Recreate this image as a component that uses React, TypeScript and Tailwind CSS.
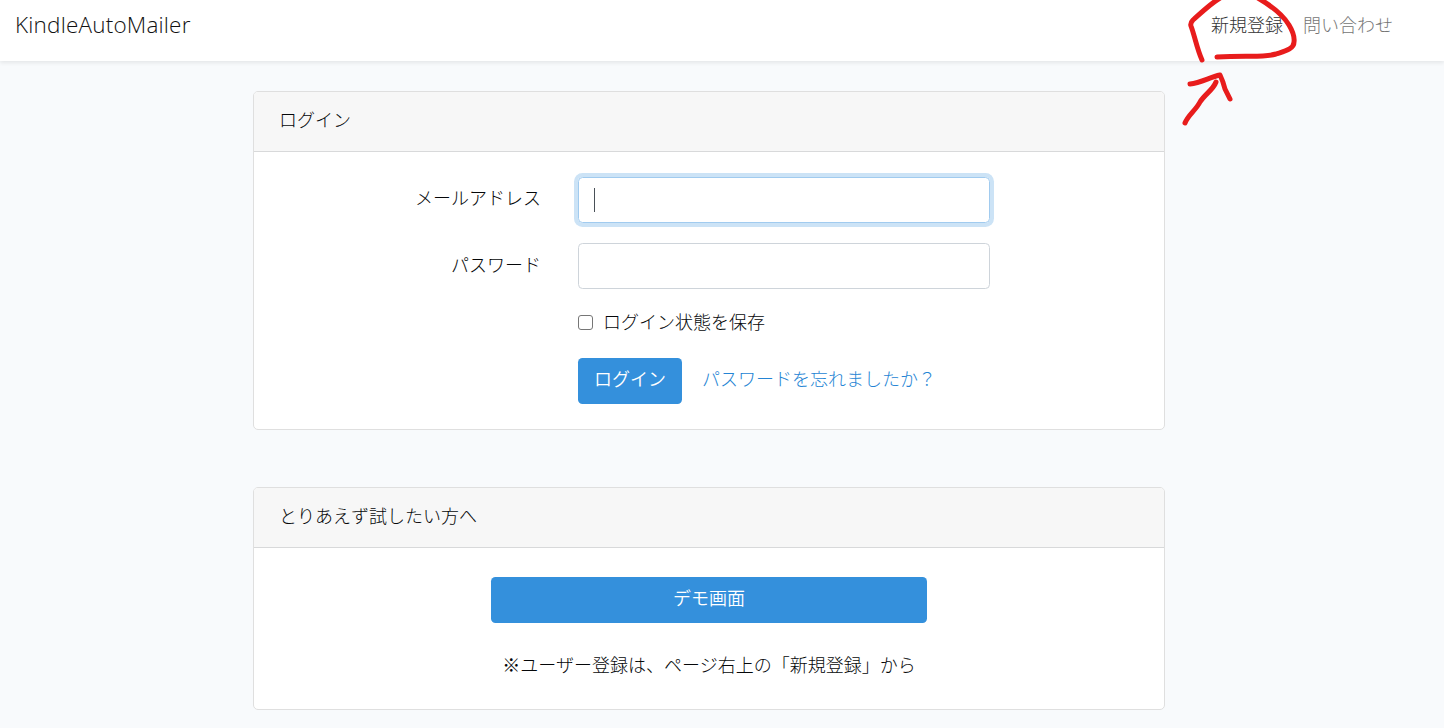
import React from "react";

function Card({ title, className, children }: { title: string; className: string; children: React.ReactNode }) {
  return (
    <section className={`flex w-[912px] flex-col overflow-hidden rounded-[5px] border border-[#dfdfdf] bg-white ${className}`}>
      <header className="h-[60px] shrink-0 border-b border-[#d8d9da] bg-[#f7f7f7] px-[25px] pt-[13px]">{title}</header>
      {children}
    </section>
  );
}

function Annotation() {
  return (
    <svg className="pointer-events-none absolute top-0 right-0" width="280" height="140" viewBox="0 0 280 140" fill="none" stroke="#e81c1c" strokeWidth="5" strokeLinecap="round" strokeLinejoin="round">
      <path d="M38 60C33 49 31 37 27 26Q26 23 29 20C38 12 46 4 56 -2M94 -2C106 5 119 15 125 25Q131 35 130 42C130 49 121 51 112 54C99 58 85 55 53 57" />
      <path d="M21 123C24 115 32 110 36 102C41 94 49 90 52 82M26 84C37 83 46 77 56 75Q59 81 61 89L66 99" />
    </svg>
  );
}

export default function App() {
  return (
    <div className="relative flex h-[728px] w-[1444px] flex-col overflow-hidden bg-[#f8fafc] font-['Noto_Sans_CJK_JP',sans-serif] text-[18px] leading-[28.8px] font-light text-[#050709]">
      <nav className="flex h-[61px] shrink-0 justify-between bg-white pr-[51px] pl-[15px] shadow-[0_2px_4px_rgba(0,0,0,0.08)]">
        <a className="pt-[7px] font-['Open_Sans',sans-serif] text-[22.5px] leading-[36px] tracking-[0.2px] text-[#111111]">KindleAutoMailer</a>
        <div className="flex gap-[20px] pt-[10px]">
          <a className="text-[#333333]">新規登録</a>
          <a className="text-[#757575]">問い合わせ</a>
        </div>
      </nav>
      <main className="flex flex-col pt-[30px] pl-[253px]">
        <Card title="ログイン" className="h-[339px]">
          <form className="flex flex-col pt-[25px] pl-[324px]">
            <div className="-ml-[200px] flex">
              <label className="w-[163px] pt-[6px] text-right">メールアドレス</label>
              <div className="ml-[37px] flex h-[46px] w-[412px] items-center rounded-[4.5px] border border-[#a1cbef] pl-[15px] shadow-[0_0_0_4px_#cce3f6]">
                <span className="h-[24px] w-px bg-[#495057]" />
              </div>
            </div>
            <div className="mt-[20px] -ml-[200px] flex">
              <label className="w-[163px] pt-[7px] text-right">パスワード</label>
              <div className="ml-[37px] h-[46px] w-[412px] rounded-[4.5px] border border-[#ced4da]" />
            </div>
            <label className="mt-[19px] flex h-[29px] items-center">
              <span className="h-[15px] w-[15px] rounded-[3px] border border-[#767676] bg-white" />
              <span className="ml-[10px] pb-[2px]">ログイン状態を保存</span>
            </label>
            <div className="mt-[21px] flex">
              <button type="button" className="h-[46px] w-[104px] rounded-[4.5px] bg-[#3490dc] pb-[5px] font-[350] text-white">ログイン</button>
              <a className="ml-[20px] pt-[6px] text-[#2484d4]">パスワードを忘れましたか？</a>
            </div>
          </form>
        </Card>
        <Card title="とりあえず試したい方へ" className="mt-[57px] h-[223px]">
          <div className="flex flex-col items-center pt-[29px]">
            <button type="button" className="h-[46px] w-[436px] rounded-[4.5px] bg-[#3490dc] pb-[5px] font-[350] text-white">デモ画面</button>
            <p className="mt-[27px]">※ユーザー登録は、ページ右上の「新規登録」から</p>
          </div>
        </Card>
      </main>
      <Annotation />
    </div>
  );
}
